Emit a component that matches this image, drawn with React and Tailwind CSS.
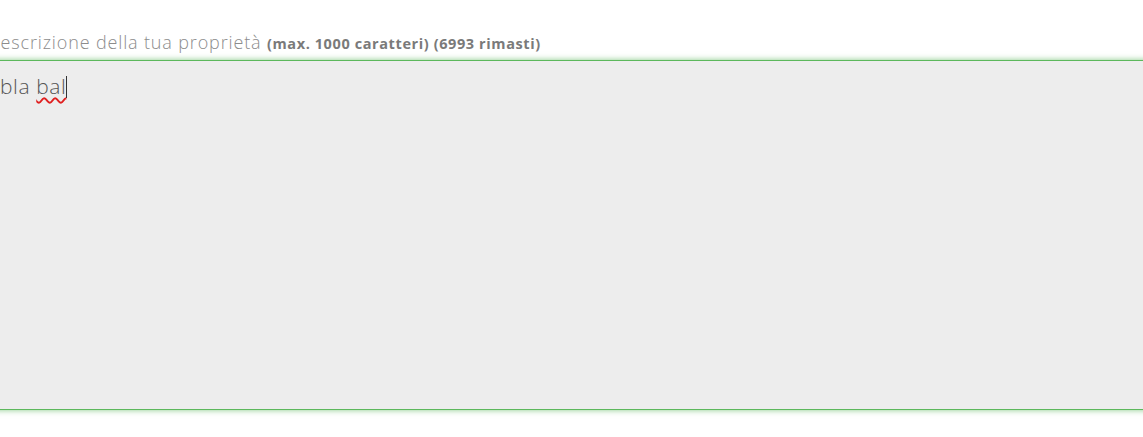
import React from "react";

export default function App() {
  return (
    <div className="w-[1143px] h-[437px] bg-white overflow-hidden pt-[30px] font-['Open_Sans',sans-serif]">
      <label className="block ml-[-13px] text-[18px] leading-[25px] tracking-[0.85px] text-[#8c8c8c] font-light whitespace-nowrap">
        Descrizione della tua proprietà{" "}
        <span className="text-[14.5px] tracking-[0.6px] font-bold text-[#7a7a7a]">(max. 1000 caratteri) (6993 rimasti)</span>
      </label>
      <div className="mt-[4px] -mx-4 h-[350px] bg-[#ededed] border-y border-[#5cb85c] shadow-[0_0_6px_rgba(92,184,92,0.75)] px-4 pt-[12px]">
        <p className="text-[21px] leading-[27px] tracking-[0.6px] text-[#555] font-light">
          bla{" "}
          <span className="underline decoration-wavy decoration-[#e02020] decoration-[1.5px] underline-offset-[3px]">bal</span>
          <span className="inline-block w-px h-[22px] bg-[#333] align-[-4px]" />
        </p>
      </div>
    </div>
  );
}
